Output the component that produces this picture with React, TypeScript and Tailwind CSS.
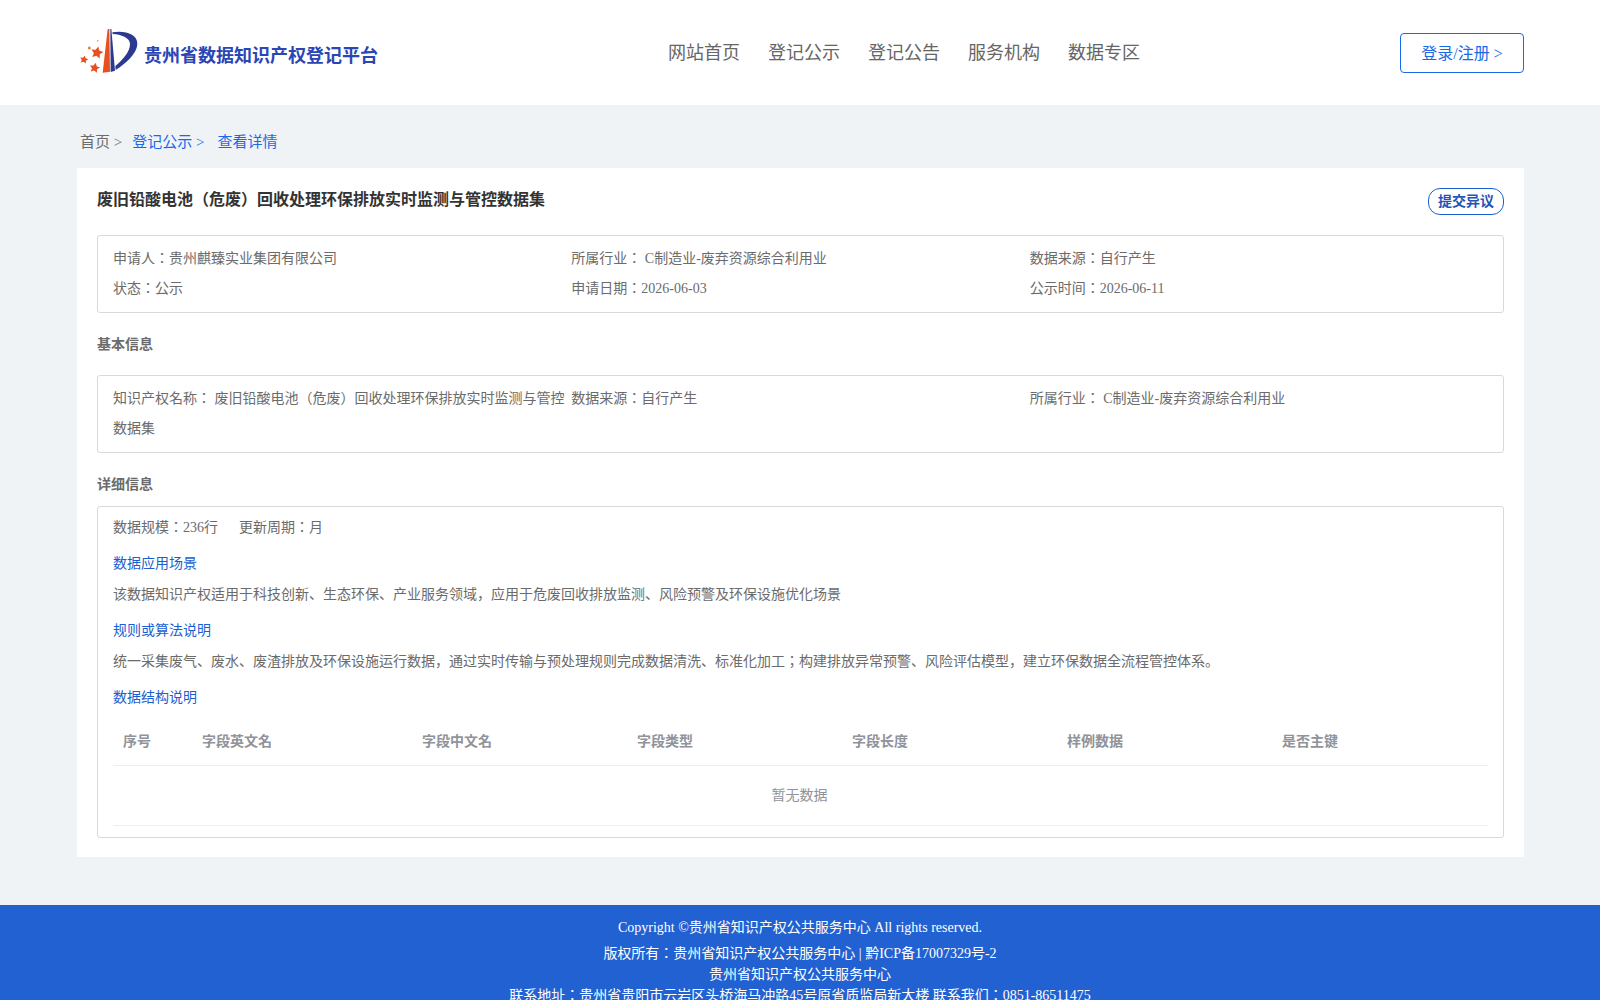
const navItems = ['网站首页', '登记公示', '登记公告', '服务机构', '数据专区'];
const columns = ['序号', '字段英文名', '字段中文名', '字段类型', '字段长度', '样例数据', '是否主键'];

function Star({ cx, cy, r }: { cx: number; cy: number; r: number }) {
  const points = Array.from({ length: 10 }, (_, i) => {
    const radius = i % 2 === 0 ? r : r * 0.5;
    const angle = -Math.PI / 2 + (i * Math.PI) / 5 + 0.2;
    return `${cx + radius * Math.cos(angle)},${cy + radius * Math.sin(angle)}`;
  }).join(' ');
  return <polygon points={points} fill="#e8501f" />;
}

function Logo() {
  return (
    <svg viewBox="6 0 201 192" className="w-[67px] h-[64px] shrink-0">
      <path d="M98 27 L103 27 L105 155 L83 158 Z" fill="#e8501f" />
      <path d="M106 27 L109 27 L120 152 L107 156 Z" fill="#2b3a8f" />
      <path d="M112 37 C150 31 188 42 187 72 C186 102 152 130 122 150 L121 138 C142 120 165 96 165 72 C165 53 138 43 113 42 Z" fill="#2b3a8f" />
      <Star cx={66} cy={98} r={19} />
      <Star cx={27} cy={119} r={13} />
      <Star cx={59} cy={144} r={16} />
      <circle cx="43" cy="84" r="4.5" fill="#ec7a4a" />
      <circle cx="68" cy="62" r="2.5" fill="#ec9a7a" />
    </svg>
  );
}

export default function App() {
  return (
    <div className="h-[1000px] overflow-hidden bg-[#eff3f6] text-[14px] text-[#6b6b6b] font-['Liberation_Serif','Noto_Sans_CJK_JP',serif]">
      {/* 顶部导航 */}
      <header className="h-[105px] bg-white flex items-start pl-[77px] pr-[76px]">
        <div className="w-[591px] flex items-center pt-[20px]">
          <Logo />
          <span className="text-[18px] font-bold text-[#2a46b5] mt-[9px]">贵州省数据知识产权登记平台</span>
        </div>
        <nav className="flex gap-[28px] pt-[40px] text-[18px] leading-[27px] text-[#666]">
          {navItems.map((item) => (
            <span key={item}>{item}</span>
          ))}
        </nav>
        <button className="ml-auto mt-[33px] w-[124px] h-[40px] pt-[2px] rounded-[4px] border border-[#1a6ae8] bg-white text-[16px] text-[#1a6ae8]">
          登录/注册 &gt;
        </button>
      </header>

      <div className="pl-[77px] pr-[76px]">
        {/* 面包屑 */}
        <div className="h-[63px] flex items-center pl-[3px] text-[15px] pt-[11px]">
          <span>首页 &gt;</span>
          <span className="ml-[10px] text-[#1a6ae8]">登记公示 &gt;</span>
          <span className="ml-[13px] text-[#1a6ae8]">查看详情</span>
        </div>

        <main className="h-[689px] bg-white p-[20px]">
          <div className="flex items-start justify-between h-[47px]">
            <h1 className="text-[16px] leading-[24px] font-bold text-[#333]">
              废旧铅酸电池（危废）回收处理环保排放实时监测与管控数据集
            </h1>
            <button className="w-[76px] h-[27px] rounded-[12px] border border-[#1a5fd0] text-[14px] font-bold text-[#1f55b8]">
              提交异议
            </button>
          </div>

          <section className="h-[78px] rounded-[3px] border border-[#d9d9d9] px-[15px] pt-[8px] grid grid-cols-3 content-start leading-[30px]">
            <div>申请人：贵州麒臻实业集团有限公司</div>
            <div>所属行业： C制造业-废弃资源综合利用业</div>
            <div>数据来源：自行产生</div>
            <div>状态：公示</div>
            <div>申请日期：2026-06-03</div>
            <div>公示时间：2026-06-11</div>
          </section>

          <h2 className="h-[62px] pt-[20px] text-[14px] leading-[24px] font-bold">基本信息</h2>

          <section className="h-[78px] rounded-[3px] border border-[#d9d9d9] px-[15px] pt-[8px] grid grid-cols-3 content-start leading-[30px]">
            <div className="pr-[6px]">知识产权名称： 废旧铅酸电池（危废）回收处理环保排放实时监测与管控数据集</div>
            <div>数据来源：自行产生</div>
            <div>所属行业： C制造业-废弃资源综合利用业</div>
          </section>

          <h2 className="h-[53px] pt-[20px] text-[14px] leading-[24px] font-bold">详细信息</h2>

          <section className="h-[332px] rounded-[3px] border border-[#d9d9d9] px-[15px]">
            <div className="flex gap-[21px] h-[41px] items-center">
              <span>数据规模：236行</span>
              <span>更新周期：月</span>
            </div>
            <div className="h-[32px] leading-[32px] text-[#1a5fd0]">数据应用场景</div>
            <div className="h-[35px] leading-[30px]">该数据知识产权适用于科技创新、生态环保、产业服务领域，应用于危废回收排放监测、风险预警及环保设施优化场景</div>
            <div className="h-[32px] leading-[32px] text-[#1a5fd0]">规则或算法说明</div>
            <div className="h-[35px] leading-[30px]">统一采集废气、废水、废渣排放及环保设施运行数据，通过实时传输与预处理规则完成数据清洗、标准化加工；构建排放异常预警、风险评估模型，建立环保数据全流程管控体系。</div>
            <div className="h-[32px] leading-[32px] text-[#1a5fd0]">数据结构说明</div>

            <div className="mt-[4px] grid grid-cols-[79px_220px_215px_215px_215px_215px_1fr] h-[48px] items-center border-b border-[#ebeef5] font-bold text-[#909399]">
              {columns.map((col) => (
                <div key={col} className="pl-[10px]">{col}</div>
              ))}
            </div>
            <div className="h-[60px] flex items-center justify-center pr-[2px] border-b border-[#ebeef5] text-[#909399]">暂无数据</div>
          </section>
        </main>
      </div>

      {/* 页脚 */}
      <footer className="mt-[48px] h-[95px] bg-[#2161d1] text-center text-white pt-[13px]">
        <div className="leading-[20px] mb-[5px]">Copyright ©贵州省知识产权公共服务中心 All rights reserved.</div>
        <div className="leading-[22px]">版权所有：贵州省知识产权公共服务中心 | 黔ICP备17007329号-2</div>
        <div className="leading-[20px]">贵州省知识产权公共服务中心</div>
        <div className="leading-[21px]">联系地址：贵州省贵阳市云岩区头桥海马冲路45号原省质监局新大楼 联系我们：0851-86511475</div>
      </footer>
    </div>
  );
}
